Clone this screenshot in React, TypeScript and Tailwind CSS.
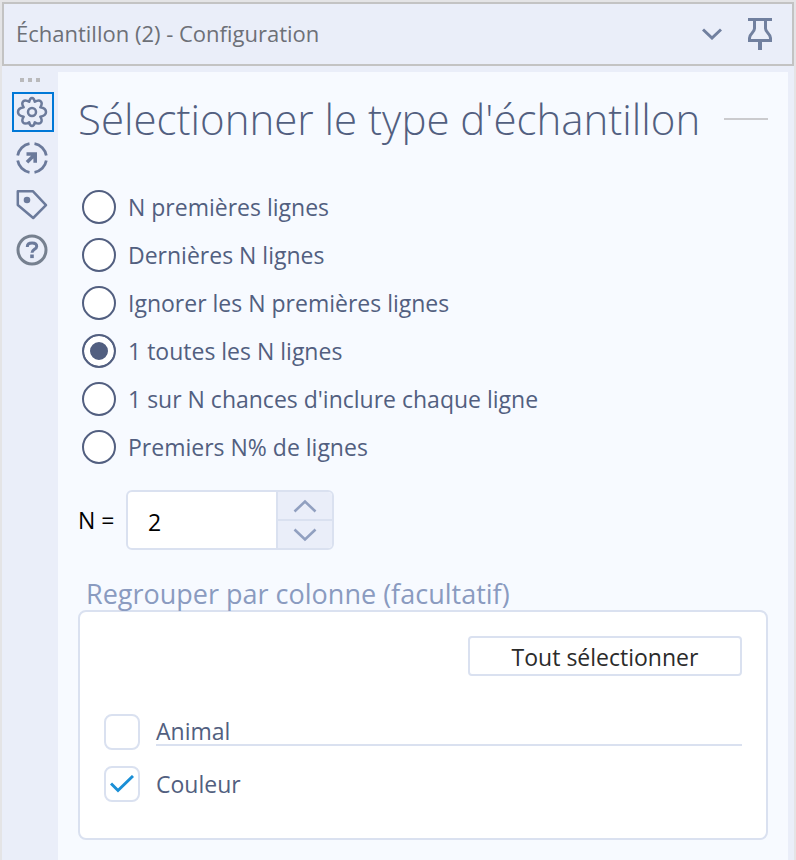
import { useState } from 'react';

const MODES = [
  { id: 'first', label: 'N premières lignes' },
  { id: 'last', label: 'Dernières N lignes' },
  { id: 'skip', label: 'Ignorer les N premières lignes' },
  { id: 'every', label: '1 toutes les N lignes' },
  { id: 'chance', label: "1 sur N chances d'inclure chaque ligne" },
  { id: 'percent', label: 'Premiers N% de lignes' },
];

const COLUMNS = ['Animal', 'Couleur'];

function ChevronIcon({ up = false }: { up?: boolean }) {
  return (
    <svg width="24" height="14" viewBox="0 0 24 14" fill="none" stroke="currentColor" strokeWidth="2.6">
      <path d={up ? 'M1.500 12.500 12 2.500 22.500 12.500' : 'M1.500 1.500 12 11.500 22.500 1.500'} />
    </svg>
  );
}

function PinIcon() {
  return (
    <svg width="24" height="32" viewBox="0 0 24 32" fill="none" stroke="currentColor" strokeWidth="3">
      <path d="M0 1.500h24M6.500 2v8.500c0 4-5 5-5 9.500v2.500h21V20c0-4.500-5-5.500-5-9.500V2" />
      <path d="M12 23v9" strokeWidth="4" />
    </svg>
  );
}

function GearIcon() {
  return (
    <svg width="32" height="32" viewBox="0 0 32 32" fill="none" stroke="currentColor" strokeWidth="2.5">
      <path
        strokeLinejoin="round"
        d="M16 2c1.800 0 2.300 1.200 2.800 3.800 2.200-1.400 4.600-1.900 6-.500s.900 3.800-.500 6C27 11.800 30 13.400 30 16s-3 4.200-5.700 4.700c1.400 2.200 1.900 4.600.500 6s-3.800.900-6-.500C18.300 28.800 17.800 30 16 30s-2.300-1.200-2.800-3.800c-2.200 1.400-4.600 1.900-6 .500s-.900-3.800.500-6C5 20.200 2 18.600 2 16s3-4.200 5.700-4.700c-1.400-2.200-1.900-4.600-.500-6s3.800-.900 6 .500C13.700 3.200 14.200 2 16 2z"
      />
      <circle cx="16" cy="16" r="4" />
    </svg>
  );
}

function TargetIcon() {
  return (
    <svg width="32" height="32" viewBox="0 0 32 32" fill="none" stroke="currentColor" strokeWidth="2.8">
      <path d="M18.500 1.700A14.500 14.500 0 0 1 30.300 13.500M30.300 18.500A14.500 14.500 0 0 1 18.500 30.300M13.500 30.300A14.500 14.500 0 0 1 1.700 18.500M1.700 13.500A14.500 14.500 0 0 1 13.500 1.700" />
      <path d="M10.500 12h8.700v8.700M11 20.200l8-8" strokeWidth="3.6" />
    </svg>
  );
}

function TagIcon() {
  return (
    <svg width="32" height="32" viewBox="0 0 32 32" fill="none" stroke="currentColor" strokeWidth="2.5" strokeLinejoin="round">
      <path d="M1.800 3.200h15L30 17.200 17.200 30 1.800 17z" />
      <circle cx="11" cy="12" r="3.300" fill="currentColor" stroke="none" />
    </svg>
  );
}

function HelpIcon() {
  return (
    <svg width="32" height="32" viewBox="0 0 32 32" fill="none" stroke="currentColor" strokeWidth="3">
      <circle cx="16" cy="16" r="14" className="text-[#76808f]" />
      <path d="M11.300 13c0-2.500 1.900-3.900 4.800-3.900s4.600 1.300 4.600 3.400c0 2.900-4.700 2.900-4.700 6.300" />
      <path d="M16 20.500v3.600" strokeWidth="3.6" />
    </svg>
  );
}

const TOOLS = [
  { id: 'settings', label: 'Configuration', Icon: GearIcon },
  { id: 'target', label: 'Navigation', Icon: TargetIcon },
  { id: 'tag', label: 'Annotation', Icon: TagIcon },
  { id: 'help', label: 'Aide', Icon: HelpIcon },
];

export default function App() {
  const [tool, setTool] = useState('settings');
  const [mode, setMode] = useState('every');
  const [n, setN] = useState(2);
  const [grouped, setGrouped] = useState<string[]>(['Couleur']);

  function toggleColumn(column: string) {
    setGrouped((prev) =>
      prev.includes(column) ? prev.filter((c) => c !== column) : [...prev, column]
    );
  }

  return (
    <div className="flex min-h-screen flex-col border-x-2 border-t-2 border-[#e4e4e6] bg-[#eaeef9] font-['Open_Sans',sans-serif] text-[23px] leading-8 text-[#525f80]">
      {/* Title bar */}
      <header className="flex h-16 items-center border-2 border-[#c3c3c3] pr-5 pl-3 text-[#6d7077]">
        <h1 className="flex-1 pb-0.5 text-[22px]">Échantillon (2) - Configuration</h1>
        <div className="flex items-center gap-[26px] text-[#71809f]">
          <button type="button" aria-label="Options de la fenêtre">
            <svg width="20" height="12" viewBox="0 0 20 12" fill="none" stroke="currentColor" strokeWidth="3">
              <path d="m1 1.500 9 8.500 9-8.500" />
            </svg>
          </button>
          <button type="button" aria-label="Épingler">
            <PinIcon />
          </button>
        </div>
      </header>

      <div className="flex flex-1 pt-1.5 pr-1.5">
        {/* Tool strip */}
        <nav className="flex w-14 shrink-0 flex-col items-start gap-1.5 pt-1.5 pl-2.5">
          <div className="flex h-2 gap-1 pl-2">
            <span className="size-1 bg-[#b9b9bb]" />
            <span className="size-1 bg-[#b9b9bb]" />
            <span className="size-1 bg-[#b9b9bb]" />
          </div>
          {TOOLS.map(({ id, label, Icon }) => (
            <button
              key={id}
              type="button"
              aria-label={label}
              onClick={() => setTool(id)}
              className={`flex h-10 w-[42px] items-center border-2 pl-0.5 text-[#6b7a9b] ${
                tool === id ? 'border-[#0078d7]' : 'border-transparent'
              }`}
            >
              <Icon />
            </button>
          ))}
        </nav>

        <main className="flex-1 bg-[#f7faff] px-5 pt-[19px] pb-5">
          <div className="flex items-center gap-6">
            <h2 className="text-[42px] leading-14 font-light whitespace-nowrap">
              Sélectionner le type d'échantillon
            </h2>
            <hr className="flex-1 border-t-2 border-[#cbcbce]" />
          </div>

          <div role="radiogroup" aria-label="Type d'échantillon" className="mt-9 flex flex-col">
            {MODES.map((m) => (
              <label key={m.id} className="flex h-12 items-center gap-3 pl-1">
                <input
                  type="radio"
                  name="mode"
                  checked={mode === m.id}
                  onChange={() => setMode(m.id)}
                  className="size-[34px] appearance-none rounded-full border-2 border-[#525f80] bg-white checked:bg-[#525f80] checked:shadow-[inset_0_0_0_6px_white]"
                />
                {m.label}
              </label>
            ))}
          </div>

          {/* N spinner */}
          <div className="mt-[19px] flex items-center gap-2 text-black">
            <label htmlFor="n" className="w-10 whitespace-nowrap">
              N =
            </label>
            <div className="flex h-15 w-52 overflow-hidden rounded-md border-2 border-[#dae1f0] bg-white">
              <input
                id="n"
                type="text"
                inputMode="numeric"
                value={n}
                onChange={(e) => setN(Number(e.target.value) || 0)}
                className="min-w-0 flex-1 pt-1 pl-5 outline-none"
              />
              <div className="flex w-14 flex-col border-l-2 border-[#dae1f0] bg-[#eaeef9] text-[#91a0c0]">
                <button
                  type="button"
                  aria-label="Augmenter"
                  onClick={() => setN(n + 1)}
                  className="flex flex-1 items-center justify-center border-b-2 border-[#dae1f0]"
                >
                  <ChevronIcon up />
                </button>
                <button
                  type="button"
                  aria-label="Diminuer"
                  onClick={() => setN(Math.max(0, n - 1))}
                  className="flex flex-1 items-center justify-center"
                >
                  <ChevronIcon />
                </button>
              </div>
            </div>
          </div>

          {/* Grouping */}
          <section aria-labelledby="group-title" className="mt-7">
            <h3 id="group-title" className="pl-2 text-[27px] text-[#8a9bc0]">
              Regrouper par colonne (facultatif)
            </h3>
            <div className="rounded-lg border-2 border-[#dae1f0] bg-white px-6 pt-6 pb-[34px]">
              <button
                type="button"
                onClick={() => setGrouped(COLUMNS)}
                className="ml-auto block h-10 w-[274px] rounded-sm border-2 border-[#dae1f0] pt-0.5 text-[#2b2b2b]"
              >
                Tout sélectionner
              </button>
              <ul className="mt-9 flex flex-col gap-3">
                {COLUMNS.map((column) => (
                  <li key={column}>
                    <label className="flex h-10 items-center gap-4">
                      <span className="grid place-items-center">
                        <input
                          type="checkbox"
                          checked={grouped.includes(column)}
                          onChange={() => toggleColumn(column)}
                          className="peer col-start-1 row-start-1 size-9 appearance-none rounded-lg border-2 border-[#dae1f0] bg-white"
                        />
                        <svg
                          className="pointer-events-none invisible col-start-1 row-start-1 text-[#1a8fd6] peer-checked:visible"
                          width="24"
                          height="18"
                          viewBox="0 0 24 18"
                          fill="none"
                          stroke="currentColor"
                          strokeWidth="3"
                        >
                          <path d="m1 8.500 7 7L23 1" />
                        </svg>
                      </span>
                      <span
                        className={`flex-1 leading-[26px] ${
                          column === COLUMNS[0] ? 'border-b-2 border-[#dae1f0]' : ''
                        }`}
                      >
                        {column}
                      </span>
                    </label>
                  </li>
                ))}
              </ul>
            </div>
          </section>
        </main>
      </div>
    </div>
  );
}
